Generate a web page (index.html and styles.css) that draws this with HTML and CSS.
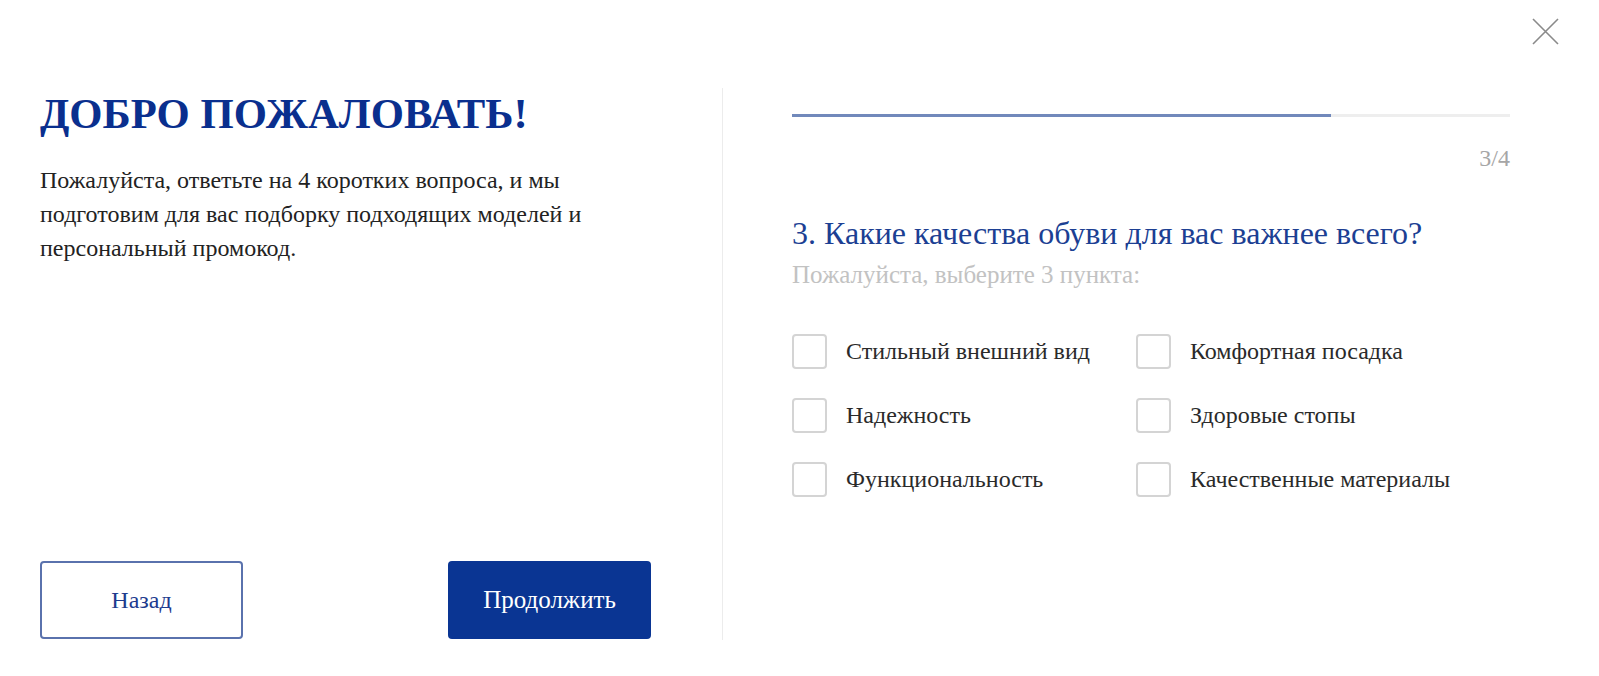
FILE: index.html
```html
<!DOCTYPE html>
<html lang="ru">
<head>
<meta charset="utf-8">
<title>Опрос</title>
<link rel="stylesheet" href="styles.css">
</head>
<body>
<div class="modal">
  <button class="close" aria-label="Закрыть">
    <svg width="27" height="27" viewBox="0 0 27 27"><path d="M1 1 L26 26 M26 1 L1 26" stroke="#8a8a8a" stroke-width="1.6" fill="none"/></svg>
  </button>
  <div class="intro">
    <h1 class="intro-title">ДОБРО ПОЖАЛОВАТЬ!</h1>
    <p class="intro-text">Пожалуйста, ответьте на 4 коротких вопроса, и мы подготовим для вас подборку подходящих моделей и персональный промокод.</p>
    <div class="actions">
      <button class="btn btn-back">Назад</button>
      <button class="btn btn-next">Продолжить</button>
    </div>
  </div>
  <div class="divider"></div>
  <div class="quiz">
    <div class="progress"><div class="progress-fill" style="width: 75%"></div></div>
    <div class="counter">3/4</div>
    <h2 class="question">3. Какие качества обуви для вас важнее всего?</h2>
    <div class="hint">Пожалуйста, выберите 3 пункта:</div>
    <div class="options">
      <label class="option"><span class="box"></span><span class="label">Стильный внешний вид</span></label>
      <label class="option"><span class="box"></span><span class="label">Комфортная посадка</span></label>
      <label class="option"><span class="box"></span><span class="label">Надежность</span></label>
      <label class="option"><span class="box"></span><span class="label">Здоровые стопы</span></label>
      <label class="option"><span class="box"></span><span class="label">Функциональность</span></label>
      <label class="option"><span class="box"></span><span class="label">Качественные материалы</span></label>
    </div>
  </div>
</div>
</body>
</html>
```

FILE: styles.css
```css
* { box-sizing: border-box; }
html, body { margin: 0; padding: 0; background: #fff; }
body { font-family: "Liberation Serif", "Times New Roman", serif; color: #333; }

.modal {
  position: relative;
  display: flex;
  height: 676px;
  padding: 88px 0 0 40px;
}

.close {
  position: absolute;
  top: 18px;
  left: 1532px;
  padding: 0;
  border: 0;
  background: none;
  width: 27px;
  height: 27px;
  cursor: pointer;
}
.close svg { display: block; }

.intro {
  width: 611px;
  height: 552px;
  display: flex;
  flex-direction: column;
}
.intro-title {
  margin: 2px 0 0;
  font-size: 42.7px;
  line-height: 48px;
  font-weight: bold;
  color: #0a2f8e;
}
.intro-text {
  margin: 25px 0 0;
  font-size: 24px;
  line-height: 34px;
  color: #222;
  width: 590px;
}
.actions {
  margin-top: auto;
  padding-bottom: 1px;
  display: flex;
  justify-content: space-between;
}
.btn {
  height: 78px;
  width: 203px;
  border-radius: 4px;
  font-family: "Liberation Serif", "Times New Roman", serif;
  font-size: 24px;
  cursor: pointer;
}
.btn-back {
  background: #fff;
  border: 2px solid #5a72ad;
  color: #1d3b8e;
}
.btn-next {
  background: #0a3593;
  border: 0;
  color: #fff;
  font-size: 25px;
}

.divider {
  width: 1px;
  height: 552px;
  margin-left: 71px;
  background: #ececec;
}

.quiz {
  width: 718px;
  margin-left: 69px;
}
.progress {
  margin-top: 26px;
  height: 3px;
  background: #eeeeee;
}
.progress-fill {
  height: 100%;
  background: #7189bb;
}
.counter {
  margin-top: 27px;
  text-align: right;
  font-size: 24px;
  line-height: 28px;
  color: #a6a6a6;
}
.question {
  margin: 43px 0 0;
  font-size: 32px;
  line-height: 36px;
  font-weight: normal;
  color: #1c3f93;
}
.hint {
  margin-top: 10px;
  font-size: 25px;
  line-height: 28px;
  color: #c2c2c2;
}
.options {
  margin-top: 45px;
  display: grid;
  grid-template-columns: 344px 1fr;
  row-gap: 29px;
}
.option {
  display: flex;
  align-items: center;
  gap: 19px;
  height: 35px;
}
.box {
  flex: none;
  width: 35px;
  height: 35px;
  border: 2px solid #d4d4d4;
  border-radius: 4px;
}
.label {
  font-size: 24px;
  color: #2a2a2a;
}
```
